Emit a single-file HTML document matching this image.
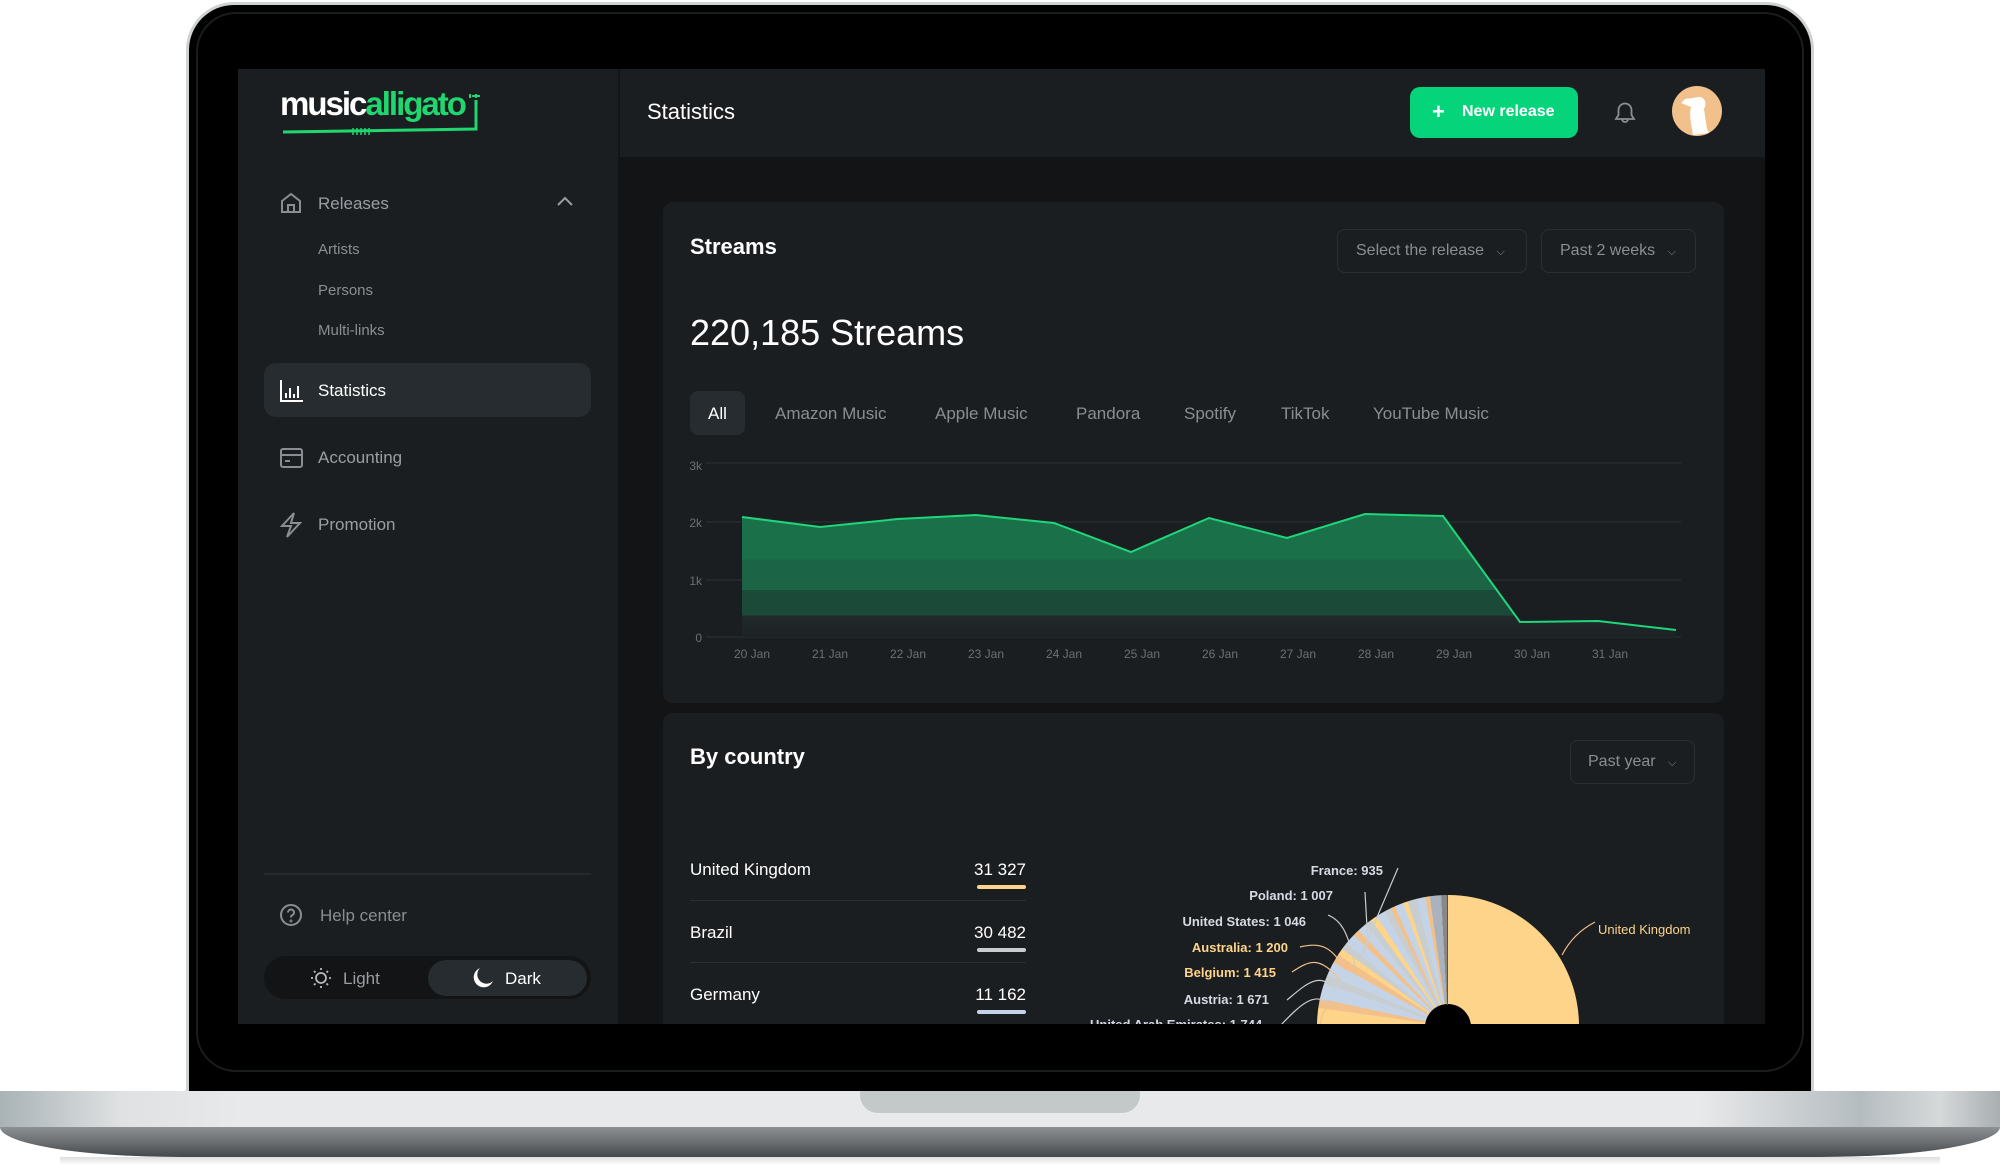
<!DOCTYPE html>
<html><head><meta charset="utf-8">
<style>
*{margin:0;padding:0;box-sizing:border-box}
html,body{width:2000px;height:1174px;overflow:hidden;background:#fff;font-family:"Liberation Sans",sans-serif}
.abs{position:absolute}
.t{position:absolute;white-space:nowrap;line-height:1}
</style></head><body>
<div class="abs" style="left:186px;top:2px;width:1628px;height:1095px;border-radius:48px 48px 0 0;background:#cfd2d3"></div>
<div class="abs" style="left:189px;top:5px;width:1622px;height:1092px;border-radius:45px 45px 0 0;background:#000"></div>
<div class="abs" style="left:196px;top:12px;width:1608px;height:1060px;border-radius:40px;border:2px solid #1a1d1e"></div>
<div class="abs" style="left:0;top:1091px;width:2000px;height:36px;background:linear-gradient(90deg,#a9b2b6 0,#dfe1e2 6%,#e8e9ea 12%,#e8e9ea 85%,#b5bcc0 93%,#d6d9da 97%,#a8aeb1 100%)"></div>
<div class="abs" style="left:0;top:1127px;width:2000px;height:30px;border-radius:0 0 180px 180px/0 0 30px 30px;background:linear-gradient(#8d9194,#6a6e71 50%,#45484a)"></div>
<div class="abs" style="left:60px;top:1157px;width:1880px;height:8px;background:linear-gradient(#c8c8c8,#fff);opacity:.6"></div>
<div class="abs" style="left:860px;top:1091px;width:280px;height:22px;border-radius:0 0 18px 18px;background:#c3c8c9"></div>
<div class="abs" style="left:238px;top:69px;width:1527px;height:955px;background:#121415;overflow:hidden">
 <div class="abs" style="left:0;top:0;width:380px;height:955px;background:#1b1e21"></div>
 <div class="abs" style="left:382px;top:0;width:1145px;height:88px;background:#1b1e21"></div>
</div>
<div class="t" style="left:280px;top:87px;font-size:33px;font-weight:bold;letter-spacing:-2px;color:#fff">music<span style="color:#1fd66f">alligato</span></div>
<svg class="abs" style="left:280px;top:88px" width="210" height="50"><path d="M3 44 L196 41 L196 12" stroke="#1fd66f" stroke-width="3" fill="none"/><path d="M190 6v4M196 6v4M192 8h8" stroke="#1fd66f" stroke-width="2"/><path d="M73 40v7M77 40v7M81 40v7M85 40v7M89 40v7" stroke="#1fd66f" stroke-width="1.5"/></svg>
<svg class="abs" style="left:279px;top:191px" width="24" height="24" fill="none" stroke="#8a8e92" stroke-width="2"><path d="M3 10 L12 3 L21 10 V21 H3Z M9 21 V14 H15 V21"/></svg>
<div class="t" style="left:318px;top:195px;font-size:17px;color:#9a9ea2">Releases</div>
<svg class="abs" style="left:556px;top:195px" width="18" height="12" fill="none" stroke="#9a9ea2" stroke-width="2"><path d="M2 10 L9 3 L16 10"/></svg>
<div class="t" style="left:318px;top:242px;font-size:15px;color:#8a8e92">Artists</div>
<div class="t" style="left:318px;top:283px;font-size:15px;color:#8a8e92">Persons</div>
<div class="t" style="left:318px;top:323px;font-size:15px;color:#8a8e92">Multi-links</div>
<div class="abs" style="left:264px;top:363px;width:327px;height:54px;border-radius:12px;background:#262c2f"></div>
<svg class="abs" style="left:279px;top:379px" width="24" height="24" fill="none" stroke="#fff" stroke-width="2"><path d="M2 1V22H24M7 14v5M11 9v10M15 15v4M19 7v12"/></svg>
<div class="t" style="left:318px;top:382px;font-size:17px;color:#fff">Statistics</div>
<svg class="abs" style="left:279px;top:446px" width="24" height="24" fill="none" stroke="#8a8e92" stroke-width="2"><rect x="2" y="3" width="21" height="18" rx="2"/><path d="M2 9H23M6 15H11"/></svg>
<div class="t" style="left:318px;top:449px;font-size:17px;color:#9a9ea2">Accounting</div>
<svg class="abs" style="left:279px;top:512px" width="24" height="26" fill="none" stroke="#8a8e92" stroke-width="2"><path d="M15 1 L3 14 H12 L8 25 L21 11 H12Z"/></svg>
<div class="t" style="left:318px;top:516px;font-size:17px;color:#9a9ea2">Promotion</div>
<div class="abs" style="left:264px;top:873px;width:327px;height:2px;background:#24292c"></div>
<svg class="abs" style="left:279px;top:903px" width="24" height="24" fill="none" stroke="#8a8e92" stroke-width="2"><circle cx="12" cy="12" r="10"/><path d="M9 9.5a3 3 0 1 1 4 2.8c-1 .4-1 1-1 2.2"/><circle cx="12" cy="18" r=".5"/></svg>
<div class="t" style="left:320px;top:907px;font-size:17px;color:#8a8e92">Help center</div>
<div class="abs" style="left:264px;top:956px;width:327px;height:43px;border-radius:22px;background:#121415"></div>
<div class="abs" style="left:428px;top:960px;width:159px;height:36px;border-radius:18px;background:#262c2f"></div>
<svg class="abs" style="left:310px;top:967px" width="22" height="22" fill="none" stroke="#b5b9bc" stroke-width="1.8"><circle cx="11" cy="11" r="5"/><path d="M11 1v2M11 19v2M1 11h2M19 11h2M4 4l1.5 1.5M16.5 16.5L18 18M4 18l1.5-1.5M16.5 5.5L18 4"/></svg>
<div class="t" style="left:343px;top:970px;font-size:17px;color:#9a9ea2">Light</div>
<svg class="abs" style="left:472px;top:967px" width="22" height="22"><path d="M8 1 A10 10 0 1 0 21 14 A8 8 0 0 1 8 1Z" fill="#fff"/></svg>
<div class="t" style="left:505px;top:970px;font-size:17px;color:#fff">Dark</div>
<div class="t" style="left:647px;top:101px;font-size:22px;color:#fff">Statistics</div>
<div class="abs" style="left:1410px;top:87px;width:168px;height:51px;border-radius:10px;background:#05d47b"></div>
<div class="t" style="left:1432px;top:101px;font-size:22px;font-weight:bold;color:#fff">+</div>
<div class="t" style="left:1462px;top:104px;font-size:16px;font-weight:bold;color:#fff">New release</div>
<svg class="abs" style="left:1612px;top:100px" width="26" height="26" fill="none" stroke="#8a8e92" stroke-width="1.8"><path d="M4 19H22L19.5 15V10a6.5 6.5 0 0 0-13 0V15Z M10 19a3 3 0 0 0 6 0"/></svg>
<svg class="abs" style="left:1671px;top:85px" width="52" height="52"><circle cx="26" cy="26" r="25" fill="#f2c08a"/><path d="M22 50 C20 38 18 30 20 22 L10 18 L14 14 L28 12 C34 12 36 18 33 24 L36 44 L38 48Z" fill="#fff"/></svg>
<div class="abs" style="left:663px;top:202px;width:1061px;height:501px;border-radius:10px;background:#1b1e21"></div>
<div class="t" style="left:690px;top:236px;font-size:22px;font-weight:bold;color:#fff">Streams</div>
<div class="abs" style="left:1337px;top:229px;width:190px;height:44px;border-radius:8px;border:1px solid #2a2f33"></div>
<div class="t" style="left:1356px;top:243px;font-size:16px;color:#8a8e92">Select the release <span style="font-size:11px;margin-left:8px">⌵</span></div>
<div class="abs" style="left:1541px;top:229px;width:155px;height:44px;border-radius:8px;border:1px solid #2a2f33"></div>
<div class="t" style="left:1560px;top:243px;font-size:16px;color:#8a8e92">Past 2 weeks <span style="font-size:11px;margin-left:8px">⌵</span></div>
<div class="t" style="left:690px;top:315px;font-size:36px;color:#fff">220,185 Streams</div>
<div class="abs" style="left:690px;top:391px;width:55px;height:44px;border-radius:8px;background:#262c2f"></div>
<div class="t" style="left:708px;top:405px;font-size:17px;color:#fff">All</div>
<div class="t" style="left:775px;top:405px;font-size:17px;color:#8a8e92">Amazon Music</div>
<div class="t" style="left:935px;top:405px;font-size:17px;color:#8a8e92">Apple Music</div>
<div class="t" style="left:1076px;top:405px;font-size:17px;color:#8a8e92">Pandora</div>
<div class="t" style="left:1184px;top:405px;font-size:17px;color:#8a8e92">Spotify</div>
<div class="t" style="left:1281px;top:405px;font-size:17px;color:#8a8e92">TikTok</div>
<div class="t" style="left:1373px;top:405px;font-size:17px;color:#8a8e92">YouTube Music</div>
<svg class="abs" style="left:0;top:0" width="2000" height="700">
<defs><linearGradient id="g" gradientUnits="userSpaceOnUse" x1="0" y1="510" x2="0" y2="637"><stop offset="0" stop-color="#1a7149"/><stop offset=".39" stop-color="#1a7149"/><stop offset=".39" stop-color="#1b6446"/><stop offset=".63" stop-color="#1b6446"/><stop offset=".63" stop-color="#1c4a38"/><stop offset=".83" stop-color="#1c4a38"/><stop offset=".83" stop-color="#22292a"/><stop offset="1" stop-color="#1d2324"/></linearGradient></defs>
<g stroke="#262b2f" stroke-width="1.5"><path d="M706 463H1681M706 522H1681M706 580H1681M706 637H1681"/></g>
<g font-size="12" fill="#6c7074" font-family="Liberation Sans"><text x="702" y="470" text-anchor="end">3k</text><text x="702" y="527" text-anchor="end">2k</text><text x="702" y="585" text-anchor="end">1k</text><text x="702" y="642" text-anchor="end">0</text>
<text x="734" y="658">20 Jan</text><text x="812" y="658">21 Jan</text><text x="890" y="658">22 Jan</text><text x="968" y="658">23 Jan</text><text x="1046" y="658">24 Jan</text><text x="1124" y="658">25 Jan</text><text x="1202" y="658">26 Jan</text><text x="1280" y="658">27 Jan</text><text x="1358" y="658">28 Jan</text><text x="1436" y="658">29 Jan</text><text x="1514" y="658">30 Jan</text><text x="1592" y="658">31 Jan</text></g>
<path d="M742 517L820 527L898 519L976 515L1054 523L1131 552L1209 518L1287 538L1365 514L1443 516L1520 622L1598 621L1676 630V637H742Z" fill="url(#g)"/>
<path d="M742 517L820 527L898 519L976 515L1054 523L1131 552L1209 518L1287 538L1365 514L1443 516L1520 622L1598 621L1676 630" fill="none" stroke="#1fd67a" stroke-width="2"/>
</svg>
<div class="abs" style="left:663px;top:713px;width:1061px;height:311px;border-radius:10px 10px 0 0;background:#1b1e21"></div>
<div class="t" style="left:690px;top:746px;font-size:22px;font-weight:bold;color:#fff">By country</div>
<div class="abs" style="left:1570px;top:740px;width:125px;height:44px;border-radius:8px;border:1px solid #2a2f33"></div>
<div class="t" style="left:1588px;top:754px;font-size:16px;color:#8a8e92">Past year <span style="font-size:11px;margin-left:8px">⌵</span></div>
<div class="t" style="left:690px;top:861px;font-size:17px;color:#fff">United Kingdom</div>
<div class="t" style="left:926px;top:861px;width:100px;text-align:right;font-size:17px;color:#fff">31 327</div>
<div class="abs" style="left:977px;top:885px;width:49px;height:4px;border-radius:2px;background:#fdd48a"></div>
<div class="abs" style="left:690px;top:900px;width:336px;height:1px;background:#2a2f33"></div>
<div class="t" style="left:690px;top:924px;font-size:17px;color:#fff">Brazil</div>
<div class="t" style="left:926px;top:924px;width:100px;text-align:right;font-size:17px;color:#fff">30 482</div>
<div class="abs" style="left:977px;top:948px;width:49px;height:4px;border-radius:2px;background:#c9cdd0"></div>
<div class="abs" style="left:690px;top:962px;width:336px;height:1px;background:#2a2f33"></div>
<div class="t" style="left:690px;top:986px;font-size:17px;color:#fff">Germany</div>
<div class="t" style="left:926px;top:986px;width:100px;text-align:right;font-size:17px;color:#fff">11 162</div>
<div class="abs" style="left:977px;top:1010px;width:49px;height:4px;border-radius:2px;background:#c5d3e6"></div>
<div class="abs" style="left:1300px;top:880px;width:300px;height:144px;overflow:hidden">
 <div class="abs" style="left:17px;top:15px;width:262px;height:262px;border-radius:50%;background:conic-gradient(#fdd48a 0 180deg,#f2c08a 180deg 270deg,#fdd48a 270deg 278deg,#f2c08a 278deg 282deg,#c5d3e6 282deg 289deg,#c8cdd0 289deg 293deg,#c5d3e6 293deg 299deg,#f2c08a 299deg 303deg,#fdd48a 303deg 306deg,#c8cdd0 306deg 309deg,#c5d3e6 309deg 314deg,#f2c08a 314deg 317deg,#c5d3e6 317deg 321deg,#c8cdd0 321deg 324deg,#fdd48a 324deg 327deg,#c5d3e6 327deg 331deg,#c8cdd0 331deg 334deg,#f2c08a 334deg 336deg,#c5d3e6 336deg 340deg,#fdd48a 340deg 342deg,#c8cdd0 342deg 346deg,#c5d3e6 346deg 350deg,#f2c08a 350deg 352deg,#aab3bd 352deg 357deg,#888 357deg 360deg)"></div>
 <div class="abs" style="left:125px;top:124px;width:46px;height:46px;border-radius:50%;background:#000"></div>
 <div class="abs" style="left:147px;top:15px;width:1px;height:110px;background:#555"></div>
</div>
<svg class="abs" style="left:1250px;top:860px" width="370" height="164" fill="none" stroke-width="1.2">
<path d="M148 8 L113 90" stroke="#ccc"/><path d="M115 32 L118 85 L108 100" stroke="#ccc"/>
<path d="M78 55 C90 60 98 70 105 106" stroke="#ccc"/><path d="M50 87 C70 82 82 86 95 110" stroke="#f2c08a"/>
<path d="M42 112 C60 100 70 96 90 120" stroke="#f2c08a"/><path d="M37 140 C55 125 70 110 85 130" stroke="#ccc"/>
<path d="M30 166 C50 145 65 130 80 145" stroke="#ccc"/><path d="M70 166 C72 150 78 145 82 150" stroke="#f2c08a"/>
<path d="M345 62 C330 70 320 80 312 95" stroke="#f2c08a"/>
</svg>
<div class="t" style="left:1233px;top:864px;width:150px;text-align:right;font-size:13px;font-weight:bold;color:#d6dbe3">France: 935</div>
<div class="t" style="left:1183px;top:889px;width:150px;text-align:right;font-size:13px;font-weight:bold;color:#d6dbe3">Poland: 1 007</div>
<div class="t" style="left:1106px;top:915px;width:200px;text-align:right;font-size:13px;font-weight:bold;color:#d6dbe3">United States: 1 046</div>
<div class="t" style="left:1088px;top:941px;width:200px;text-align:right;font-size:13px;font-weight:bold;color:#fdd48a">Australia: 1 200</div>
<div class="t" style="left:1076px;top:966px;width:200px;text-align:right;font-size:13px;font-weight:bold;color:#fdd48a">Belgium: 1 415</div>
<div class="t" style="left:1069px;top:993px;width:200px;text-align:right;font-size:13px;font-weight:bold;color:#d6dbe3">Austria: 1 671</div>
<div class="abs" style="left:1090px;top:1018px;width:180px;height:6px;overflow:hidden"><div class="t" style="left:0;top:0;font-size:13px;font-weight:bold;color:#d6dbe3">United Arab Emirates: 1 744</div></div>
<div class="t" style="left:1598px;top:923px;font-size:13px;color:#fdd48a">United Kingdom</div>
</body></html>
